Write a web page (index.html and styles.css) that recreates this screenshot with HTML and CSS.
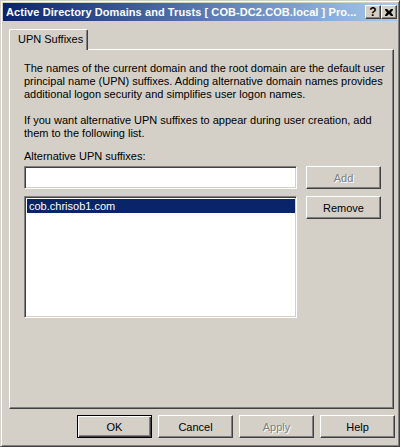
FILE: index.html
```html
<!DOCTYPE html>
<html>
<head>
<meta charset="utf-8">
<link rel="stylesheet" href="styles.css">
</head>
<body>
<div class="window">
  <div class="titlebar">
    <span class="title">Active Directory Domains and Trusts [ COB-DC2.COB.local ] Pro...</span>
    <div class="caption-buttons">
      <span class="cap-btn help">?</span>
      <span class="cap-btn close">
        <svg width="8" height="7" viewBox="0 0 8 7"><path d="M0 0h2l2 2 2-2h2v1l-2 2.5 2 2.5v1h-2l-2-2-2 2h-2v-1l2-2.5-2-2.5z" fill="#000"/></svg>
      </span>
    </div>
  </div>
  <div class="client">
    <div class="tabs"><div class="tab">UPN Suffixes</div></div>
    <div class="panel">
      <p class="para">The names of the current domain and the root domain are the default user<br>principal name (UPN) suffixes. Adding alternative domain names provides<br>additional logon security and simplifies user logon names.</p>
      <p class="para second">If you want alternative UPN suffixes to appear during user creation, add<br>them to the following list.</p>
      <div class="label">Alternative UPN suffixes:</div>
      <div class="row">
        <div class="textbox"></div>
        <button class="btn" disabled>Add</button>
      </div>
      <div class="row list-row">
        <div class="listbox"><div class="item selected">cob.chrisob1.com</div></div>
        <button class="btn">Remove</button>
      </div>
    </div>
    <div class="dialog-buttons">
      <button class="btn default">OK</button>
      <button class="btn">Cancel</button>
      <button class="btn" disabled>Apply</button>
      <button class="btn">Help</button>
    </div>
  </div>
</div>
</body>
</html>
```

FILE: styles.css
```css
* { box-sizing: border-box; }
html, body { margin: 0; padding: 0; background: #D4D0C8; }
body {
  font-family: "Liberation Sans", Arial, sans-serif;
  font-size: 11px;
  color: #000;
}
.window {
  width: 400px;
  height: 447px;
  background: #D4D0C8;
  border: 1px solid;
  border-color: #D4D0C8 #404040 #404040 #D4D0C8;
  box-shadow: inset 1px 1px #FFFFFF, inset -1px -1px #808080;
  padding: 2px;
  display: flex;
  flex-direction: column;
}
.titlebar {
  height: 18px;
  background: linear-gradient(to right, #0A246A, #A6CAF0);
  display: flex;
  align-items: center;
  padding-left: 3px;
  padding-right: 0;
}
.title {
  flex: 1;
  color: #fff;
  font-weight: bold;
  font-size: 11px;
  letter-spacing: 0.08px;
  white-space: nowrap;
  overflow: hidden;
}
.caption-buttons {
  display: flex;
  gap: 0;
}
.cap-btn {
  width: 16px;
  height: 14px;
  background: #D4D0C8;
  border: 1px solid;
  border-color: #FFFFFF #404040 #404040 #FFFFFF;
  box-shadow: inset -1px -1px #808080;
  display: flex;
  align-items: center;
  justify-content: center;
  font-weight: bold;
  font-size: 12px;
  line-height: 1;
  color: #000;
}
.client {
  flex: 1;
  padding: 8px 3px 0 6px;
  display: flex;
  flex-direction: column;
}
.tabs { display: flex; }
.tab {
  position: relative;
  z-index: 1;
  width: 79px;
  height: 21px;
  margin-bottom: -1px;
  background: #D4D0C8;
  border-top: 1px solid #fff;
  border-left: 1px solid #fff;
  border-right: 1px solid #404040;
  box-shadow: inset -1px 0 #808080;
  border-top-left-radius: 2px;
  border-top-right-radius: 2px;
  padding: 3px 0 0 8px;
  line-height: 13px;
}
.panel {
  width: 385px;
  height: 360px;
  border: 1px solid;
  border-color: #FFFFFF #404040 #404040 #FFFFFF;
  box-shadow: inset -1px -1px #808080;
  padding: 12px 0 0 14px;
}
.para {
  margin: 0;
  line-height: 13px;
  white-space: nowrap;
}
.para.second { margin-top: 13px; }
.label {
  margin-top: 10px;
  line-height: 13px;
  margin-bottom: 3px;
}
.row {
  display: flex;
  gap: 9px;
  align-items: flex-start;
}
.list-row { margin-top: 7px; }
.textbox, .listbox {
  width: 273px;
  background: #fff;
  border: 1px solid;
  border-color: #808080 #FFFFFF #FFFFFF #808080;
  box-shadow: inset 1px 1px #404040, inset -1px -1px #D4D0C8;
}
.textbox { height: 23px; }
.listbox {
  height: 122px;
  padding: 2px 1px 0 2px;
}
.item {
  height: 14px;
  line-height: 14px;
  padding-left: 2px;
}
.item.selected {
  background: #0A246A;
  color: #fff;
}
.btn {
  width: 75px;
  height: 23px;
  padding: 0;
  margin: 0;
  font-family: inherit;
  font-size: 11px;
  color: #000;
  background: #D4D0C8;
  border: 1px solid;
  border-color: #FFFFFF #404040 #404040 #FFFFFF;
  box-shadow: inset -1px -1px #808080;
  border-radius: 0;
}
.btn:disabled {
  color: #808080;
  text-shadow: 1px 1px #fff;
}
.btn.default {
  border: 1px solid #000;
  box-shadow: inset 1px 1px #fff, inset -1px -1px #404040, inset -2px -2px #808080;
}
.dialog-buttons {
  display: flex;
  justify-content: flex-end;
  gap: 6px;
  margin-top: 6px;
  margin-right: -1px;
}
```
